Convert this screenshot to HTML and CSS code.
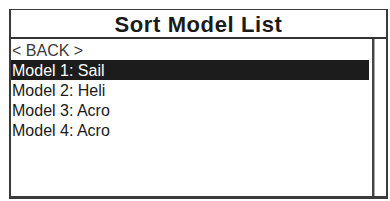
FILE: index.html
```html
<!DOCTYPE html>
<html lang="en">
<head>
    <meta charset="UTF-8">
    <meta name="viewport" content="width=device-width, initial-scale=1.0">
    <title>Sort Model List</title>
    <link rel="stylesheet" href="styles.css">
</head>
<body>
    <div class="screen">
        <div class="title">Sort Model List</div>
        <div class="content">
            <ul class="list">
                <li class="item back">&lt; BACK &gt;</li>
                <li class="item selected">Model 1: Sail</li>
                <li class="item">Model 2: Heli</li>
                <li class="item">Model 3: Acro</li>
                <li class="item">Model 4: Acro</li>
            </ul>
            <div class="scrollbar"></div>
        </div>
    </div>
</body>
</html>
```

FILE: styles.css
```css
/* Schermo generale */
body {
    margin: 0;
    padding: 0;
    background-color: #fff;
    font-family: 'Liberation Sans', Arial, sans-serif;
    color: #1a1a1a;
}

.screen {
    margin: 9px 0 0 9px;
    width: 379px;
    height: 190px;
    box-sizing: border-box;
    border: 2px solid #3a3a3a;
    border-top-width: 1px;
    border-bottom-width: 3px;
    display: flex;
    flex-direction: column;
}

/* Barra del titolo */
.title {
    height: 27px;
    border-bottom: 2px solid #333;
    text-align: center;
    font-weight: bold;
    font-size: 22px;
    line-height: 29px;
    letter-spacing: 0.6px;
    color: #1a1a1a;
}

.content {
    flex: 1;
    display: flex;
}

/* Lista modelli */
.list {
    list-style: none;
    margin: 0;
    padding: 1px 0 0 0;
    flex: 1;
}

.item {
    height: 20px;
    line-height: 21px;
    font-size: 16px;
    padding-left: 1px;
    white-space: nowrap;
}

.back {
    color: #3a3a3a;
}

.selected {
    background-color: #1c1c1c;
    color: #fff;
    margin-right: 3px;
}

/* Barra di scorrimento */
.scrollbar {
    width: 12px;
    border-left: 2px solid #444;
    box-shadow: inset 1px 0 0 #aaa;
}
```
